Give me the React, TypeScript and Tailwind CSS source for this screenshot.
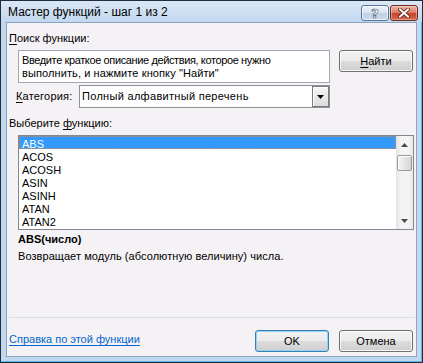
import React from "react";

const rows = ["ABS", "ACOS", "ACOSH", "ASIN", "ASINH", "ATAN", "ATAN2"];

function U({ children }: { children: React.ReactNode }) {
  return <span className="underline underline-offset-[2px]">{children}</span>;
}

function Tri({ up }: { up?: boolean }) {
  return (
    <svg width="7" height="4" viewBox="0 0 7 4" className="block">
      {up ? (
        <path d="M0 4 L3.5 0 L7 4 Z" fill="#4a4a4a" />
      ) : (
        <path d="M0 0 L7 0 L3.5 4 Z" fill="#4a4a4a" />
      )}
    </svg>
  );
}

export default function App() {
  return (
    <div className="w-[423px] h-[363px] flex flex-col border border-[#1f2d3d] bg-[#c2d8ef] shadow-[inset_-1px_-1px_0_#5ab4e6] overflow-hidden font-['Liberation_Sans',Arial,sans-serif] text-[11px] text-black">
      {/* title bar */}
      <div className="h-[21px] shrink-0 flex items-start bg-gradient-to-b from-[#dbe7f5] to-[#c2d8ef]">
        <span className="ml-[7px] mt-[4px] text-[12px] leading-[14px] text-black">
          Мастер функций - шаг 1 из 2
        </span>
        <div className="ml-auto mr-[4px] mt-[4px] flex gap-[1px]">
          <div className="w-[28px] h-[16px] rounded-[3px] border border-[#5a7799] bg-[linear-gradient(#eef3fa,#d6e2f0_50%,#bfd1e7_50%,#c9daee)] shadow-[inset_0_0_0_1px_rgba(255,255,255,0.6)] flex items-center justify-center">
            <span className="text-[13px] leading-[13px] font-bold text-white [-webkit-text-stroke:0.6px_#3d556f] font-['DejaVu_Sans',sans-serif]">
              ?
            </span>
          </div>
          <div className="w-[28px] h-[16px] rounded-[3px] border border-[#70291b] bg-[linear-gradient(#eeb3a4,#dc7b63_50%,#c4422a_50%,#d66a4e)] shadow-[inset_0_0_0_1px_rgba(255,255,255,0.35)] flex items-center justify-center">
            <svg width="12" height="10" viewBox="0 0 12 10">
              <path d="M2 1.5 L10 8.5 M10 1.5 L2 8.5" stroke="#5a1d12" strokeWidth="3.6" strokeLinecap="square" />
              <path d="M2 1.5 L10 8.5 M10 1.5 L2 8.5" stroke="#ffffff" strokeWidth="2" strokeLinecap="square" />
            </svg>
          </div>
        </div>
      </div>

      {/* client area */}
      <div className="flex-1 mx-[5px] mb-[5px] border border-[#8aa4c2] bg-[#f5f2f5] flex flex-col pl-[2px] pr-[2px]">
        <div className="mt-[9px] leading-[13px]">
          <U>П</U>оиск функции:
        </div>

        <div className="mt-[5px] flex items-start">
          <div className="ml-[9px] w-[312px] h-[33px] border border-[#a3a9b1] bg-white pl-[3px] pt-[3px] leading-[13px]">
            <div className="tracking-[-0.38px]">Введите краткое описание действия, которое нужно</div>
            <div className="tracking-[0.1px]">выполнить, и нажмите кнопку "Найти"</div>
          </div>
          <div className="ml-[9px] w-[74px] h-[22px] rounded-[3px] border border-[#707070] bg-[linear-gradient(#f2f2f2,#ebebeb_50%,#dddddd_50%,#cfcfcf)] shadow-[inset_0_0_0_1px_rgba(255,255,255,0.8)] flex items-center justify-center leading-[13px]">
            <span>
              <U>Н</U>айти
            </span>
          </div>
        </div>

        <div className="mt-[2px] flex items-center">
          <div className="w-[70px] pl-[7px] leading-[13px] tracking-[0.2px]">
            <U>К</U>атегория:
          </div>
          <div className="w-[251px] h-[23px] border border-[#8f9193] bg-white flex items-center">
            <span className="pl-[2px] flex-1 leading-[13px] tracking-[0.3px]">Полный алфавитный перечень</span>
            <div className="w-[17px] h-[21px] border border-[#7a7a7a] bg-[linear-gradient(#f6f6f6,#dcdcdc)] shadow-[inset_1px_1px_0_#ffffff] flex items-center justify-center">
              <svg width="7" height="4" viewBox="0 0 7 4" className="block">
                <path d="M0 0 L7 0 L3.5 4 Z" fill="#000" />
              </svg>
            </div>
          </div>
        </div>

        <div className="mt-[9px] leading-[13px]">
          Выберите <U>ф</U>ункцию:
        </div>

        <div className="mt-[5px] ml-[9px] w-[396px] h-[95px] border border-[#828790] bg-white flex">
          <div className="flex-1 flex flex-col">
            {rows.map((r, i) =>
              i === 0 ? (
                <div
                  key={r}
                  className="h-[13px] leading-[15px] bg-[#3399ff] text-white border border-dotted border-[#d48a3c] pl-[2px]"
                >
                  {r}
                </div>
              ) : (
                <div key={r} className="h-[13px] leading-[17px] pl-[3px]">
                  {r}
                </div>
              )
            )}
          </div>
          <div className="w-[17px] flex flex-col bg-[linear-gradient(90deg,#e3e3e3,#f4f4f4_30%,#f4f4f4_70%,#e8e8e8)]">
            <div className="h-[17px] flex items-center justify-center">
              <Tri up />
            </div>
            <div className="mx-[1px] mt-[2px] h-[16px] rounded-[2px] border border-[#9a9a9a] bg-[linear-gradient(90deg,#f5f5f5,#e6e6e6_50%,#d4d4d4)] shadow-[inset_1px_1px_0_#ffffff]" />
            <div className="flex-1" />
            <div className="h-[17px] flex items-center justify-center">
              <Tri />
            </div>
          </div>
        </div>

        <div className="mt-[3px] ml-[9px] leading-[13px] font-bold">ABS(число)</div>
        <div className="mt-[4px] ml-[9px] leading-[13px] tracking-[0.06px]">
          Возвращает модуль (абсолютную величину) числа.
        </div>

        <div className="flex-1" />

        <div className="h-px bg-[#d9dfe6] mr-[-1px]" />

        <div className="mt-[12px] mb-[4px] h-[22px] flex items-start">
          <span className="mt-[3px] leading-[13px] text-[#0066cc] underline underline-offset-[2px]">
            Справка по этой функции
          </span>
          <div className="ml-auto mr-[1px] flex gap-[10px]">
            <div className="w-[74px] h-[22px] rounded-[3px] border border-[#3c7fb1] bg-[linear-gradient(#f2f2f2,#ebebeb_50%,#dddddd_50%,#cfcfcf)] shadow-[inset_0_0_0_1px_#8fd3f6] flex items-center justify-center leading-[13px]">
              OK
            </div>
            <div className="w-[74px] h-[22px] rounded-[3px] border border-[#707070] bg-[linear-gradient(#f2f2f2,#ebebeb_50%,#dddddd_50%,#cfcfcf)] shadow-[inset_0_0_0_1px_rgba(255,255,255,0.8)] flex items-center justify-center leading-[13px]">
              Отмена
            </div>
          </div>
        </div>
      </div>
    </div>
  );
}
